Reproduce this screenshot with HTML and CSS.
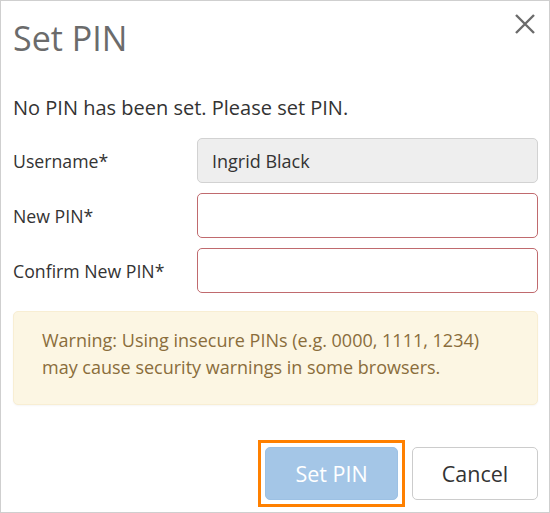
FILE: index.html
```html
<!DOCTYPE html>
<html lang="en">
<head>
<meta charset="utf-8">
<title>Set PIN</title>
<link rel="stylesheet" href="styles.css">
</head>
<body>
<div class="modal">
  <div class="modal-header">
    <h4 class="modal-title">Set PIN</h4>
    <button class="close" type="button" aria-label="Close">
      <svg width="22" height="22" viewBox="0 0 22 22"><path d="M2 2 L20 20 M20 2 L2 20" stroke="#6b6b6b" stroke-width="2.4" fill="none"/></svg>
    </button>
  </div>
  <div class="modal-body">
    <p class="intro">No PIN has been set. Please set PIN.</p>
    <div class="form-row first">
      <label class="label">Username*</label>
      <div class="input disabled">Ingrid Black</div>
    </div>
    <div class="form-row">
      <label class="label">New PIN*</label>
      <div class="input error"></div>
    </div>
    <div class="form-row">
      <label class="label">Confirm New PIN*</label>
      <div class="input error"></div>
    </div>
    <div class="warning">Warning: Using insecure PINs (e.g. 0000, 1111, 1234) may cause security warnings in some browsers.</div>
  </div>
  <div class="modal-footer">
    <div class="focus-ring"><button class="btn btn-primary" type="button">Set PIN</button></div>
    <button class="btn btn-default" type="button">Cancel</button>
  </div>
</div>
</body>
</html>
```
FILE: styles.css
```css
* { box-sizing: border-box; }
html, body { margin: 0; padding: 0; background: #fff; }
body { font-family: "Open Sans", "Noto Sans", sans-serif; color: #333; }
.modal {
  width: 550px;
  height: 513px;
  border: 1px solid #cfcfcf;
  background: #fff;
  display: flex;
  flex-direction: column;
}
.modal-header {
  display: flex;
  justify-content: space-between;
  align-items: flex-start;
  padding: 0 11px 0 12px;
  height: 74px;
}
.modal-title {
  margin: 15px 0 0 0;
  font-size: 34px;
  font-weight: 400;
  line-height: 44px;
  color: #6b6b6b;
}
.close {
  border: 0;
  background: none;
  padding: 0;
  margin: 12px 2px 0 0;
  width: 22px;
  height: 22px;
  cursor: pointer;
}
.close svg { display: block; }
.modal-body { padding: 0 11px 0 12px; }
.intro {
  margin: 20px 0 0 0;
  font-size: 20px;
  line-height: 26px;
  color: #333;
}
.form-row {
  display: flex;
  align-items: center;
  height: 45px;
  margin-top: 10px;
}
.form-row.first { margin-top: 17px; }
.label {
  width: 184px;
  font-size: 17.7px;
  color: #333;
}
.input {
  flex: 1;
  height: 45px;
  border: 1px solid #ccc;
  border-radius: 5px;
  padding: 0 14px;
  display: flex;
  align-items: center;
  font-size: 18px;
  color: #333;
  background: #fff;
}
.input.disabled { background: #eee; border-color: #d2d2d2; }
.input.error { border-color: #c06a6e; }
.warning {
  margin-top: 18px;
  height: 94px;
  background: #fcf6e3;
  border: 1px solid #f8eed3;
  border-radius: 5px;
  box-shadow: 0 1px 2px rgba(0,0,0,0.04);
  padding: 15px 40px 0 28px;
  font-size: 18px;
  line-height: 27px;
  color: #8a6d3b;
}
.modal-footer {
  margin-top: auto;
  display: flex;
  justify-content: flex-end;
  align-items: center;
  gap: 7px;
  padding: 0 11px 5px 12px;
}
.focus-ring {
  border: 3px solid #ff8000;
  padding: 4px;
}
.btn {
  display: block;
  height: 53px;
  border-radius: 5px;
  font-family: inherit;
  font-size: 21.5px;
  padding: 0;
  cursor: pointer;
}
.btn-primary {
  width: 133px;
  background: #a4c6e7;
  border: 1px solid #9dc1e4;
  color: #fff;
}
.btn-default {
  width: 126px;
  background: #fff;
  border: 1px solid #ccc;
  color: #333;
}
```
